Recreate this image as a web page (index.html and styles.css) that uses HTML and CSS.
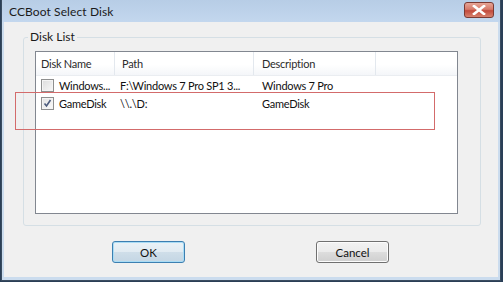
FILE: index.html
```html
<!DOCTYPE html>
<html>
<head>
<meta charset="utf-8">
<link rel="stylesheet" href="styles.css">
</head>
<body>
<div class="window">
  <div class="titlebar">
    <span class="title">CCBoot Select Disk</span>
    <div class="close" aria-label="Close">
      <svg width="14" height="10" viewBox="0 0 14 10"><path d="M2 1 L12 9 M12 1 L2 9" stroke="#ffffff" stroke-width="2.6" stroke-linecap="square" fill="none"/></svg>
    </div>
  </div>
  <div class="client">
    <fieldset class="group">
      <legend>Disk List</legend>
      <div class="list">
        <div class="row header">
          <div class="cell c1">Disk Name</div>
          <div class="cell c2">Path</div>
          <div class="cell c3">Description</div>
          <div class="cell c4"></div>
        </div>
        <div class="row item">
          <div class="cell c1"><span class="cb"></span><span class="txt">Windows...</span></div>
          <div class="cell c2"><span class="txt">F:\Windows 7 Pro SP1 3...</span></div>
          <div class="cell c3"><span class="txt">Windows 7 Pro</span></div>
          <div class="cell c4"></div>
        </div>
        <div class="row item">
          <div class="cell c1"><span class="cb checked"><svg width="11" height="11" viewBox="0 0 11 11"><path d="M2.5 5.5 L4.5 8 L8.5 2" stroke="#4d5c7d" stroke-width="1.6" fill="none"/></svg></span><span class="txt">GameDisk</span></div>
          <div class="cell c2"><span class="txt">\\.\D:</span></div>
          <div class="cell c3"><span class="txt">GameDisk</span></div>
          <div class="cell c4"></div>
        </div>
      </div>
    </fieldset>
    <div class="buttons">
      <div class="btn default">OK</div>
      <div class="btn">Cancel</div>
    </div>
  </div>
  <div class="highlight"></div>
</div>
</body>
</html>
```
FILE: styles.css
```css
html, body {
  margin: 0;
  padding: 0;
}
body {
  width: 503px;
  height: 282px;
  background: #2a3f57;
  font-family: "Lato", "Liberation Sans", sans-serif;
  font-size: 11px;
  color: #000;
  overflow: hidden;
}
.window {
  position: relative;
  box-sizing: border-box;
  width: 500px;
  height: 281px;
  margin-left: 1px;
  background: #cbdcee;
  border: 1px solid #3a4c60;
  border-top: none;
  padding: 0 2px 3px 2px;
  display: flex;
  flex-direction: column;
}
.titlebar {
  height: 22px;
  margin: 0 -2px;
  padding: 0 6px 0 7px;
  background: linear-gradient(#b7cde6, #c3d7ee);
  display: flex;
  align-items: center;
  justify-content: space-between;
}
.title {
  font-size: 12px;
  color: #1a1a1a;
  letter-spacing: 0.1px;
}
.close {
  box-sizing: border-box;
  width: 30px;
  height: 16px;
  margin-top: -2px;
  border: 1px solid #7b3a33;
  border-radius: 3px;
  background: linear-gradient(#e6a596 0%, #d67a6a 45%, #c24a3c 55%, #d7826f 100%);
  display: flex;
  align-items: center;
  justify-content: center;
}
.client {
  flex: 1;
  background: #f0f0f0;
  display: flex;
  flex-direction: column;
}
.group {
  margin: 8px 17px 0 19px;
  padding: 7px 22px 11px 11px;
  border: 1px solid #d5dfe5;
  border-radius: 3px;
  min-width: 0;
}
.group legend {
  margin-left: -7px;
  padding: 0 2px;
  font-size: 12px;
  line-height: 14px;
  color: #1a1a1a;
}
.list {
  height: 163px;
  box-sizing: border-box;
  border: 1px solid #828790;
  background: #fff;
}
.row {
  display: grid;
  grid-template-columns: 79px 139px 122px 1fr;
}
.header {
  height: 24px;
  background: linear-gradient(#ffffff 0%, #ffffff 55%, #f4f6f9 100%);
  border-bottom: 1px solid #eaedf1;
  box-sizing: border-box;
}
.cell {
  font-size: 11px;
  letter-spacing: -0.25px;
}
.header .cell {
  border-right: 1px solid #e3e8ee;
  padding-left: 5px;
  display: flex;
  align-items: center;
  color: #2b2b2b;
}
.header .c2 {
  padding-left: 7px;
}
.header .c3 {
  padding-left: 8px;
}
.header .c4 {
  border-right: none;
}
.item {
  height: 18px;
}
.item .cell {
  display: flex;
  align-items: center;
  min-width: 0;
  color: #111;
}
.item .c1 {
  padding-left: 5px;
}
.item .c2 {
  padding-left: 5px;
}
.item .c3 {
  padding-left: 8px;
}
.txt {
  white-space: nowrap;
}
.cb {
  box-sizing: border-box;
  width: 13px;
  height: 13px;
  flex: none;
  margin-right: 5px;
  border: 1px solid #8e8f8f;
  background: linear-gradient(135deg, #dcdcdc, #f8f8f8);
  box-shadow: inset 0 0 0 1px #f4f4f4;
  display: flex;
  align-items: center;
  justify-content: center;
}
.cb.checked {
  background: linear-gradient(135deg, #e2e2e2, #fbfbfb);
}
.buttons {
  display: flex;
  padding: 15px 0 0 108px;
  gap: 131px;
}
.btn {
  box-sizing: border-box;
  width: 73px;
  height: 22px;
  border: 1px solid #707070;
  border-radius: 3px;
  background: linear-gradient(#f2f2f2 0%, #ebebeb 50%, #dddddd 51%, #cfcfcf 100%);
  box-shadow: inset 0 0 0 1px #fcfcfc;
  display: flex;
  align-items: center;
  justify-content: center;
  font-size: 11.5px;
  color: #111;
}
.btn.default {
  border-color: #3c7fb1;
  box-shadow: inset 0 0 0 1px #a9dcf5;
  background: linear-gradient(#eaf2f7 0%, #e1ebf2 50%, #cfdee9 51%, #c4d6e4 100%);
}
.highlight {
  position: absolute;
  left: 13px;
  top: 92px;
  width: 420px;
  height: 38px;
  box-sizing: border-box;
  border: 1px solid #d36b6b;
  pointer-events: none;
}
```
